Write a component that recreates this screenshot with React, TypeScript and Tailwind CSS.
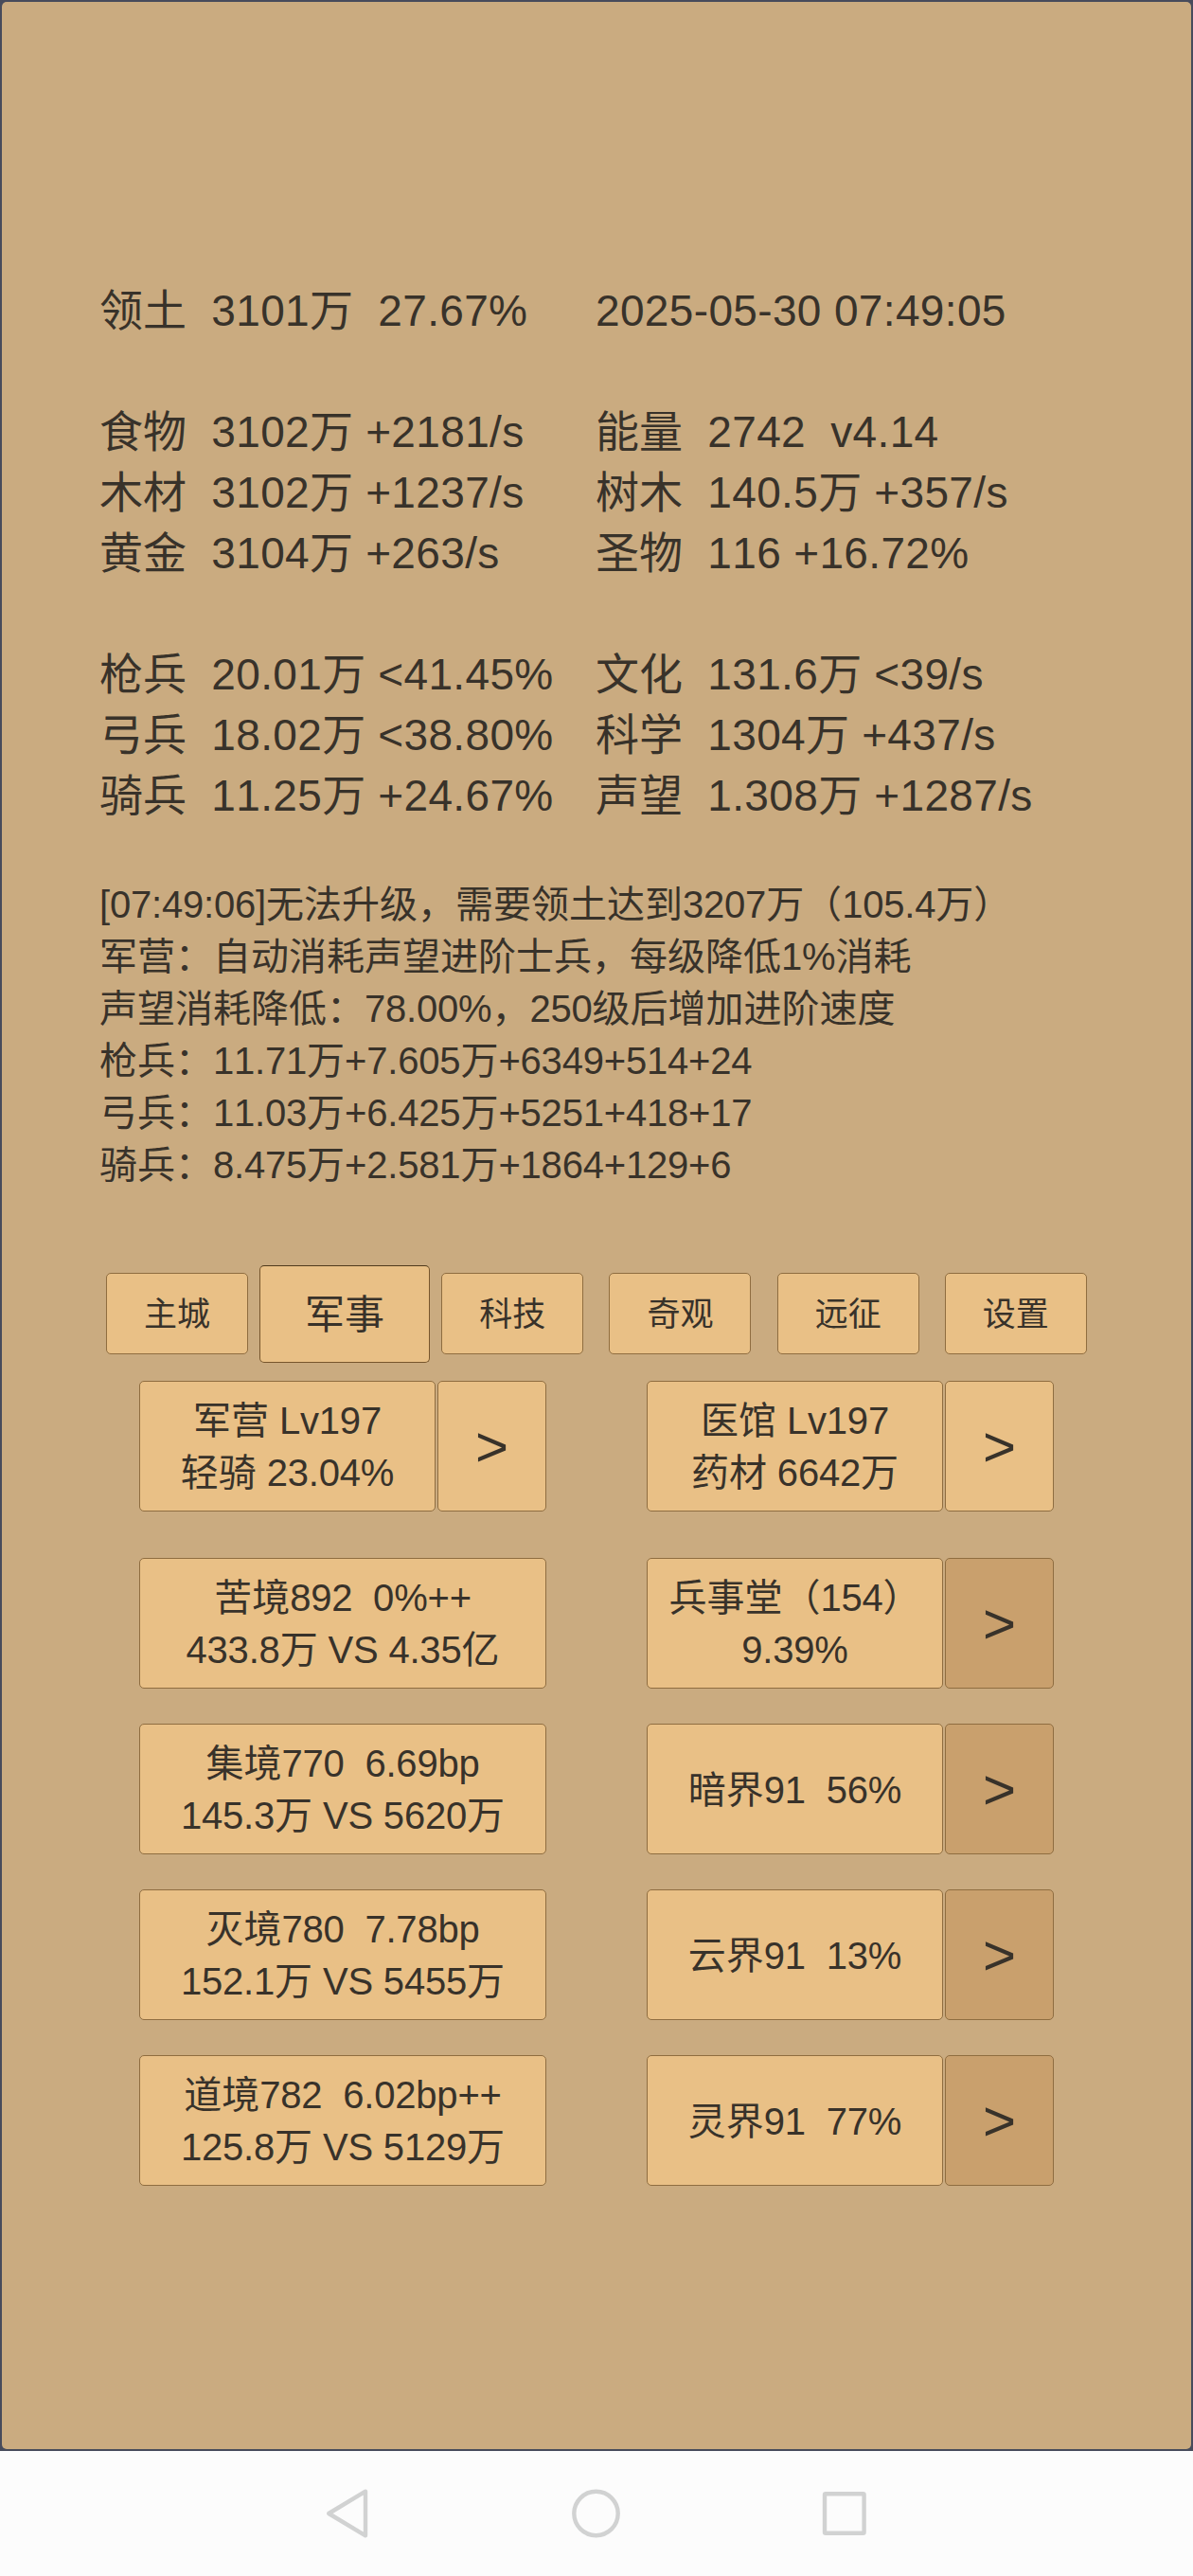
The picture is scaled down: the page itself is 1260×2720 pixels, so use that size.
import { useState } from "react";
import clsx from "clsx";

type StatRow = [string, string];

const leftStats: StatRow[] = [
  ["领土", "3101万  27.67%"],
  ["", ""],
  ["食物", "3102万 +2181/s"],
  ["木材", "3102万 +1237/s"],
  ["黄金", "3104万 +263/s"],
  ["", ""],
  ["枪兵", "20.01万 <41.45%"],
  ["弓兵", "18.02万 <38.80%"],
  ["骑兵", "11.25万 +24.67%"],
];

const rightStats: StatRow[] = [
  ["", "2025-05-30 07:49:05"],
  ["", ""],
  ["能量", "2742  v4.14"],
  ["树木", "140.5万 +357/s"],
  ["圣物", "116 +16.72%"],
  ["", ""],
  ["文化", "131.6万 <39/s"],
  ["科学", "1304万 +437/s"],
  ["声望", "1.308万 +1287/s"],
];

const log = [
  "[07:49:06]无法升级，需要领土达到3207万（105.4万）",
  "军营：自动消耗声望进阶士兵，每级降低1%消耗",
  "声望消耗降低：78.00%，250级后增加进阶速度",
  "枪兵：11.71万+7.605万+6349+514+24",
  "弓兵：11.03万+6.425万+5251+418+17",
  "骑兵：8.475万+2.581万+1864+129+6",
];

const tabs = ["主城", "军事", "科技", "奇观", "远征", "设置"];

const realms = [
  ["苦境892  0%++", "433.8万 VS 4.35亿"],
  ["集境770  6.69bp", "145.3万 VS 5620万"],
  ["灭境780  7.78bp", "152.1万 VS 5455万"],
  ["道境782  6.02bp++", "125.8万 VS 5129万"],
];

const worlds = [
  ["兵事堂（154）", "9.39%"],
  ["暗界91  56%"],
  ["云界91  13%"],
  ["灵界91  77%"],
];

const box =
  "flex shrink-0 items-center justify-center rounded-[5px] border border-[#8f6d40] text-[#38322a]";

// Latin runs get their own tracking, Chinese characters keep theirs
function Mixed({ text, tracking }: { text: string; tracking: string }) {
  return (
    <>
      {text.split(/([\x20-\x7e]+)/).map((part, i) =>
        i % 2 ? (
          <span key={i} className={tracking}>
            {part}
          </span>
        ) : (
          part
        )
      )}
    </>
  );
}

function StatColumn({ rows }: { rows: StatRow[] }) {
  return (
    <div className="text-[46px] leading-[64px]">
      {rows.map(([label, value], i) => (
        <div key={i} className="h-16 whitespace-pre">
          <Mixed
            text={label ? `${label}  ${value}` : value}
            tracking="tracking-[0.35px]"
          />
        </div>
      ))}
    </div>
  );
}

function Action({ lines, wide }: { lines: string[]; wide?: boolean }) {
  return (
    <button
      className={clsx(
        box,
        "h-[138px] flex-col bg-[#e9c086] pt-[2px] text-[40px] leading-[55px]",
        wide ? "w-[430px]" : "w-[313px]"
      )}
    >
      {lines.map((line) => (
        <span key={line} className="whitespace-pre">
          <Mixed text={line} tracking="tracking-[-0.2px]" />
        </span>
      ))}
    </button>
  );
}

function Arrow({ dim }: { dim?: boolean }) {
  return (
    <button
      className={clsx(
        box,
        "h-[138px] w-[115px] pt-[2px] text-[60px] leading-[60px]",
        dim ? "bg-[#c9a06d]" : "bg-[#e9c086]"
      )}
    >
      &gt;
    </button>
  );
}

function NavBar() {
  return (
    <div className="h-[132px] bg-[#fcfcfc] pt-[37px]">
      <svg
        className="mx-auto block"
        width="580"
        height="60"
        viewBox="0 0 580 60"
        fill="none"
        stroke="#d1d2d2"
        strokeWidth="4.4"
        strokeLinejoin="round"
      >
        <path d="M7.2 29 L46 5.7 V52.3 Z" />
        <circle cx="289.5" cy="29" r="23.2" />
        <rect x="531" y="8.2" width="41.6" height="41.6" rx="1" />
      </svg>
    </div>
  );
}

export default function App() {
  const [active, setActive] = useState("军事");

  return (
    <div className="h-[2720px] w-[1260px] overflow-hidden font-['Liberation_Sans','Noto_Sans_CJK_SC',sans-serif] text-[#38322a] [font-kerning:none]">
      <div className="h-[2588px] bg-[#474b5b] px-[2px] pt-[2px] pb-[2px]">
        <main className="h-full rounded-[5px] bg-[#caab80] pt-[294px]">
          <section className="grid grid-cols-[524px_1fr] pl-[103px]">
            <StatColumn rows={leftStats} />
            <StatColumn rows={rightStats} />
          </section>

          <section className="mt-[56px] pl-[103px] text-[40px] leading-[55px]">
            {log.map((line) => (
              <p key={line} className="whitespace-nowrap">
                <Mixed text={line} tracking="tracking-[-0.2px]" />
              </p>
            ))}
          </section>

          <nav className="mt-[77px] ml-[96.3px] grid h-[104px] grid-cols-[repeat(6,177.2px)]">
            {tabs.map((tab) => (
              <div key={tab} className="flex items-center justify-center">
                <button
                  onClick={() => setActive(tab)}
                  className={clsx(
                    box,
                    "bg-[#e9c086] pt-[2px]",
                    tab === active
                      ? "h-[103px] w-[180px] border-[#77562c] border-t-[#4f3a1c] text-[42px]"
                      : "h-[86px] w-[150px] text-[35px]"
                  )}
                >
                  {tab}
                </button>
              </div>
            ))}
          </nav>

          <section className="mt-[19px] grid grid-cols-[430px_431px] gap-x-[106px] pl-[145px]">
            <div className="flex gap-[2px]">
              <Action lines={["军营 Lv197", "轻骑 23.04%"]} />
              <Arrow />
            </div>
            <div className="flex gap-[2px]">
              <Action lines={["医馆 Lv197", "药材 6642万"]} />
              <Arrow />
            </div>
          </section>

          <section className="mt-[49px] grid grid-cols-[430px_431px] gap-x-[106px] gap-y-[37px] pl-[145px]">
            {realms.map((realm, i) => (
              <div key={i} className="contents">
                <Action lines={realm} wide />
                <div className="flex gap-[2px]">
                  <Action lines={worlds[i]} />
                  <Arrow dim />
                </div>
              </div>
            ))}
          </section>
        </main>
      </div>
      <NavBar />
    </div>
  );
}
